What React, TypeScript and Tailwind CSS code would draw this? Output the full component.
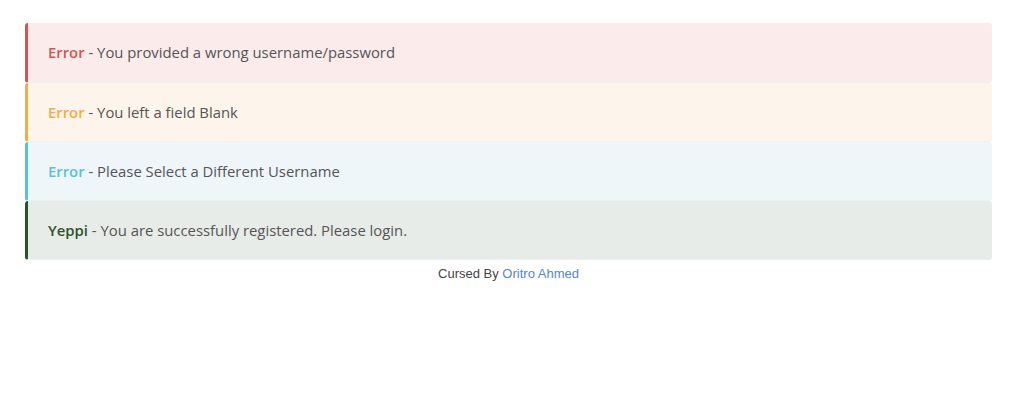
const alerts = [
  { label: 'Error', text: 'You provided a wrong username/password', bar: 'border-l-[#d9534f]', bg: 'bg-[#fbebeb]', color: 'text-[#d9534f]', h: 'h-[60px]' },
  { label: 'Error', text: 'You left a field Blank', bar: 'border-l-[#f0ad4e]', bg: 'bg-[#fdf4eb]', color: 'text-[#f0ad4e]', h: 'h-[59px]' },
  { label: 'Error', text: 'Please Select a Different Username', bar: 'border-l-[#5bc0de]', bg: 'bg-[#eef6f9]', color: 'text-[#5bc0de]', h: 'h-[59px]' },
  { label: 'Yeppi', text: 'You are successfully registered. Please login.', bar: 'border-l-[#2b542c]', bg: 'bg-[#e8ece8]', color: 'text-[#2b542c]', h: 'h-[59px]' },
]

export default function App() {
  return (
    <div className="min-h-[409px] bg-white pt-[23px]">
      <div className="ml-[25px] w-[967px]">
        {alerts.map((a, i) => (
          <div
            key={i}
            className={`flex items-center rounded-[3px] border-b border-l-[3px] border-b-[#eef0f1] pl-[20px] ${a.h} ${a.bar} ${a.bg}`}
            style={{ fontFamily: '"Open Sans", sans-serif' }}
          >
            <span className="text-[14.85px] text-[#555]">
              <span className={`font-semibold ${a.color}`}>{a.label}</span> - {a.text}
            </span>
          </div>
        ))}
        <p
          className="mt-[4px] text-center text-[13px] leading-[20px] text-[#444]"
          style={{ fontFamily: '"Liberation Sans", Arial, sans-serif' }}
        >
          Cursed By <a className="text-[#5288cc]">Oritro Ahmed</a>
        </p>
      </div>
    </div>
  )
}
